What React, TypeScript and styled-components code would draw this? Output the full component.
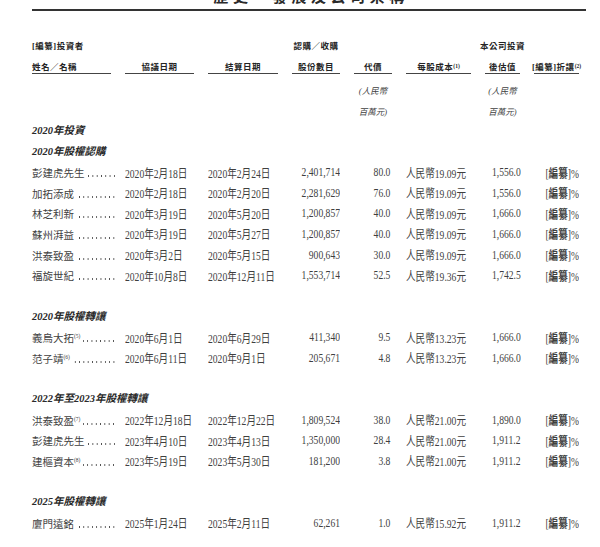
import React from "react";
import styled, { createGlobalStyle } from "styled-components";

const GlobalStyle = createGlobalStyle`
  html, body {
    margin: 0;
    padding: 0;
    background: #ffffff;
  }
  body {
    font-family: "Liberation Serif", "Noto Sans CJK TC", serif;
    color: #3f3f3f;
  }
`;

const COLS = "79px 69px 70px 48px 38px 65px 35px 45px";
const ROW_H = "20.63px";

const Sheet = styled.div`
  width: 554px;
  padding-left: 32px;
`;

const Title = styled.h1`
  margin: -11px 0 0;
  padding-left: 4px;
  font-size: 15px;
  line-height: 16px;
  font-weight: 700;
  letter-spacing: 4.5px;
  text-align: center;
  color: #2a2a2a;
`;

const Rule = styled.div`
  margin-top: 4px;
  border-top: 2px solid #333;
`;

const Grid = styled.div`
  display: grid;
  grid-template-columns: ${COLS};
  column-gap: 14px;
`;

const HeadRow = styled(Grid)<{ $top: number; $h: number }>`
  margin-top: ${(p) => p.$top}px;
  height: ${(p) => p.$h}px;
  font-size: 8.5px;
  font-weight: 700;
  letter-spacing: 0.5px;
  color: #242424;
`;

const HeadCell = styled.div<{ $col?: number; $left?: boolean; $rule?: boolean }>`
  grid-column: ${(p) => p.$col ?? "auto"};
  display: flex;
  align-items: center;
  justify-content: ${(p) => (p.$left ? "flex-start" : "center")};
  white-space: nowrap;
  border-bottom: ${(p) => (p.$rule ? "1px solid #444" : "none")};
`;

const UnitBlock = styled.div`
  margin-top: 5.7px;
`;

const UnitRow = styled(Grid)`
  height: ${ROW_H};
  align-items: center;
  font-size: 8.5px;
  font-style: italic;
`;

const UnitCell = styled.div<{ $col: number }>`
  grid-column: ${(p) => p.$col};
  text-align: center;
  white-space: nowrap;
`;

const SectionTitle = styled.div<{ $gap?: boolean }>`
  height: ${ROW_H};
  line-height: ${ROW_H};
  margin-top: ${(p) => (p.$gap ? ROW_H : "0")};
  font-size: 10.5px;
  font-weight: 700;
  font-style: italic;
  color: #2a2a2a;
`;

const DataRow = styled(Grid)`
  height: ${ROW_H};
  align-items: center;
  white-space: nowrap;
`;

const NameCell = styled.div`
  display: flex;
  align-items: center;
  margin-right: -5px;
  font-size: 10.5px;
`;

/* dotted leader between the name and the first date */
const Leader = styled.span`
  flex: 1;
  height: 2px;
  margin: 7px 0 0 3px;
  background-image: radial-gradient(circle at center, #4a4a4a 0.6px, transparent 0.95px);
  background-size: 4.3px 2px;
  background-repeat: repeat-x;
  background-position: right center;
`;

const Sup = styled.sup`
  font-size: 5.5px;
  vertical-align: 4px;
  letter-spacing: 0;
`;

/* the print font has tall, narrow figures: set larger and squeeze */
const Cell = styled.div<{ $right?: boolean; $pad?: number }>`
  font-size: 12px;
  text-align: ${(p) => (p.$right ? "right" : "left")};
  padding-right: ${(p) => p.$pad ?? 0}px;
  transform: scaleX(0.8);
  transform-origin: ${(p) => (p.$right ? "right" : "left")} center;
`;

const Bold = styled.span`
  font-weight: 700;
`;

type Row = {
  name: string;
  note?: string;
  signed: string;
  settled: string;
  shares: string;
  paid: string;
  cost: string;
  value: string;
};

type Group = { title: string; heading?: string; rows: Row[] };

const groups: Group[] = [
  {
    heading: "2020年投資",
    title: "2020年股權認購",
    rows: [
      { name: "彭建虎先生", signed: "2020年2月18日", settled: "2020年2月24日", shares: "2,401,714", paid: "80.0", cost: "人民幣19.09元", value: "1,556.0" },
      { name: "加拓添成", signed: "2020年2月18日", settled: "2020年2月20日", shares: "2,281,629", paid: "76.0", cost: "人民幣19.09元", value: "1,556.0" },
      { name: "林芝利新", signed: "2020年3月19日", settled: "2020年5月20日", shares: "1,200,857", paid: "40.0", cost: "人民幣19.09元", value: "1,666.0" },
      { name: "蘇州湃益", signed: "2020年3月19日", settled: "2020年5月27日", shares: "1,200,857", paid: "40.0", cost: "人民幣19.09元", value: "1,666.0" },
      { name: "洪泰致盈", signed: "2020年3月2日", settled: "2020年5月15日", shares: "900,643", paid: "30.0", cost: "人民幣19.09元", value: "1,666.0" },
      { name: "福旋世紀", signed: "2020年10月8日", settled: "2020年12月11日", shares: "1,553,714", paid: "52.5", cost: "人民幣19.36元", value: "1,742.5" },
    ],
  },
  {
    title: "2020年股權轉讓",
    rows: [
      { name: "義烏大拓", note: "(5)", signed: "2020年6月1日", settled: "2020年6月29日", shares: "411,340", paid: "9.5", cost: "人民幣13.23元", value: "1,666.0" },
      { name: "范子靖", note: "(6)", signed: "2020年6月11日", settled: "2020年9月1日", shares: "205,671", paid: "4.8", cost: "人民幣13.23元", value: "1,666.0" },
    ],
  },
  {
    title: "2022年至2023年股權轉讓",
    rows: [
      { name: "洪泰致盈", note: "(7)", signed: "2022年12月18日", settled: "2022年12月22日", shares: "1,809,524", paid: "38.0", cost: "人民幣21.00元", value: "1,890.0" },
      { name: "彭建虎先生", signed: "2023年4月10日", settled: "2023年4月13日", shares: "1,350,000", paid: "28.4", cost: "人民幣21.00元", value: "1,911.2" },
      { name: "建樞資本", note: "(8)", signed: "2023年5月19日", settled: "2023年5月30日", shares: "181,200", paid: "3.8", cost: "人民幣21.00元", value: "1,911.2" },
    ],
  },
  {
    title: "2025年股權轉讓",
    rows: [
      { name: "廈門遠銘", signed: "2025年1月24日", settled: "2025年2月11日", shares: "62,261", paid: "1.0", cost: "人民幣15.92元", value: "1,911.2" },
    ],
  },
];

const InvestorRow = ({ row }: { row: Row }) => (
  <DataRow>
    <NameCell>
      <span>
        {row.name}
        {row.note && <Sup>{row.note}</Sup>}
      </span>
      <Leader />
    </NameCell>
    <Cell>{row.signed}</Cell>
    <Cell>{row.settled}</Cell>
    <Cell $right>{row.shares}</Cell>
    <Cell $right $pad={2}>{row.paid}</Cell>
    <Cell>{row.cost}</Cell>
    <Cell $right $pad={2}>{row.value}</Cell>
    <Cell $right>
      [<Bold>編纂</Bold>]%
    </Cell>
  </DataRow>
);

export default function App() {
  return (
    <>
      <GlobalStyle />
      <Sheet>
        <Title>歷史、發展及公司架構</Title>
        <Rule />

        <HeadRow $top={27} $h={14}>
          <HeadCell $left>[編纂]投資者</HeadCell>
          <HeadCell $col={4}>認購／收購</HeadCell>
          <HeadCell $col={7}>本公司投資</HeadCell>
        </HeadRow>
        <HeadRow $top={7} $h={15}>
          <HeadCell $left $rule>姓名／名稱</HeadCell>
          <HeadCell $rule>協議日期</HeadCell>
          <HeadCell $rule>結算日期</HeadCell>
          <HeadCell $rule>股份數目</HeadCell>
          <HeadCell $rule>代價</HeadCell>
          <HeadCell $rule>
            每股成本<Sup>(1)</Sup>
          </HeadCell>
          <HeadCell $rule>後估值</HeadCell>
          <HeadCell $rule>
            [編纂]折讓<Sup>(2)</Sup>
          </HeadCell>
        </HeadRow>

        <UnitBlock>
          <UnitRow>
            <UnitCell $col={5}>(人民幣</UnitCell>
            <UnitCell $col={7}>(人民幣</UnitCell>
          </UnitRow>
          <UnitRow>
            <UnitCell $col={5}>百萬元)</UnitCell>
            <UnitCell $col={7}>百萬元)</UnitCell>
          </UnitRow>
        </UnitBlock>

        {groups.map((g, i) => (
          <section key={g.title}>
            {g.heading && <SectionTitle>{g.heading}</SectionTitle>}
            <SectionTitle $gap={i > 0}>{g.title}</SectionTitle>
            {g.rows.map((r) => (
              <InvestorRow key={r.name + r.signed} row={r} />
            ))}
          </section>
        ))}
      </Sheet>
    </>
  );
}
